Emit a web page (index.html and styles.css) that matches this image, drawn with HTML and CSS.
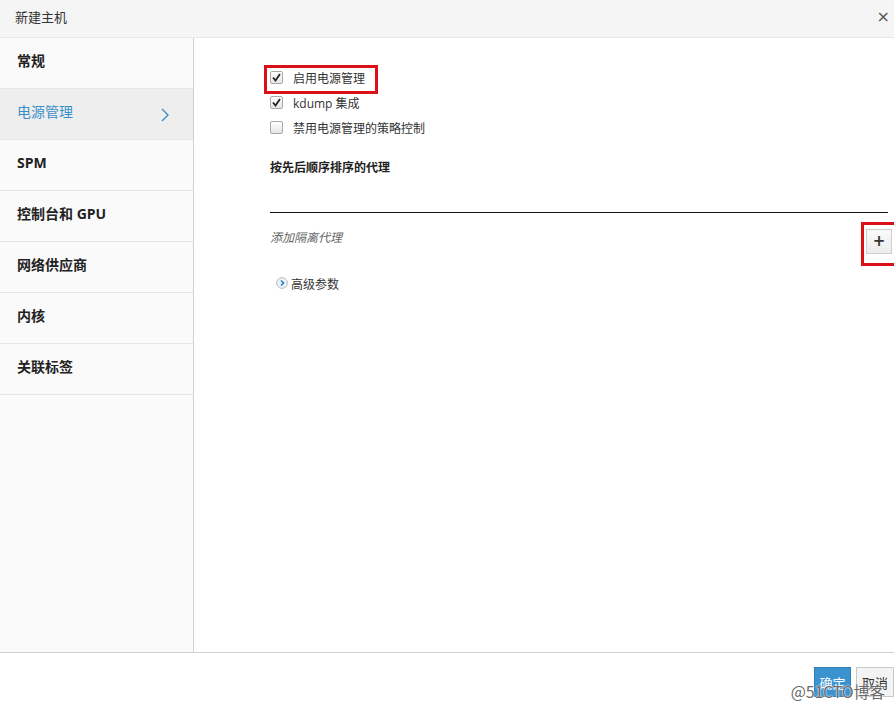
FILE: index.html
```html
<!DOCTYPE html>
<html lang="zh">
<head>
<meta charset="utf-8">
<title>新建主机</title>
<link rel="stylesheet" href="styles.css">
</head>
<body>
<div class="dialog">
  <div class="header">
    <span class="title">新建主机</span>
    <span class="close">×</span>
  </div>
  <div class="main">
    <ul class="sidebar">
      <li class="item">常规</li>
      <li class="item active">电源管理
        <svg class="chev" width="10" height="16" viewBox="0 0 10 16"><polyline points="2,2 8,8 2,14" fill="none" stroke="#3b8fc9" stroke-width="1.4"/></svg>
      </li>
      <li class="item">SPM</li>
      <li class="item">控制台和 GPU</li>
      <li class="item">网络供应商</li>
      <li class="item">内核</li>
      <li class="item">关联标签</li>
    </ul>
    <div class="content">
      <div class="row marked">
        <span class="cb checked"><svg width="9" height="9" viewBox="0 0 9 9"><polyline points="1,4.5 3.5,7.5 8,1" fill="none" stroke="#222" stroke-width="1.8"/></svg></span>
        <span class="label">启用电源管理</span>
      </div>
      <div class="row">
        <span class="cb checked"><svg width="9" height="9" viewBox="0 0 9 9"><polyline points="1,4.5 3.5,7.5 8,1" fill="none" stroke="#222" stroke-width="1.8"/></svg></span>
        <span class="label">kdump 集成</span>
      </div>
      <div class="row">
        <span class="cb"></span>
        <span class="label">禁用电源管理的策略控制</span>
      </div>
      <div class="heading">按先后顺序排序的代理</div>
      <div class="proxy-list"></div>
      <div class="add-row">
        <span class="add-label">添加隔离代理</span>
        <span class="plus-wrap"><button class="plus">+</button></span>
      </div>
      <div class="advanced">
        <span class="adv-icon"><svg width="12" height="12" viewBox="0 0 12 12"><circle cx="6" cy="6" r="5.4" fill="#eef2f6" stroke="#b5bcc4" stroke-width="1"/><polyline points="5,3.5 7.5,6 5,8.5" fill="none" stroke="#2f7fc0" stroke-width="1.6"/></svg></span>
        <span class="adv-label">高级参数</span>
      </div>
    </div>
  </div>
  <div class="footer">
    <button class="btn primary">确定</button>
    <button class="btn">取消</button>
    <span class="watermark">@51CTO博客</span>
  </div>
</div>
</body>
</html>
```
FILE: styles.css
```css
* { box-sizing: border-box; }
html, body {
  margin: 0;
  padding: 0;
  width: 894px;
  height: 708px;
  overflow: hidden;
  background: #ffffff;
  font-family: "Open Sans", "Noto Sans CJK SC", sans-serif;
  color: #333333;
}
.dialog {
  display: flex;
  flex-direction: column;
  height: 708px;
}
.header {
  height: 38px;
  background: #f5f5f5;
  border-bottom: 1px solid #e9e9e9;
  display: flex;
  align-items: center;
  justify-content: space-between;
  padding: 0 4px 4px 15px;
  flex-shrink: 0;
}
.title {
  font-size: 13px;
  color: #333;
}
.close {
  font-size: 16px;
  color: #555;
  font-family: "DejaVu Sans", sans-serif;
  line-height: 1;
}
.main {
  display: flex;
  flex: 1;
  min-height: 0;
}
.sidebar {
  list-style: none;
  margin: 0;
  padding: 0;
  width: 194px;
  flex-shrink: 0;
  background: #fafafa;
  border-right: 1px solid #d2d2d2;
}
.item {
  position: relative;
  height: 51px;
  border-bottom: 1px solid #e6e6e6;
  padding-left: 17px;
  display: flex;
  align-items: center;
  font-size: 14px;
  font-weight: 700;
  color: #222;
  padding-bottom: 6px;
}
.item.active {
  background: #eeeeee;
  color: #3b8fc9;
  font-weight: 400;
}
.chev {
  position: absolute;
  left: 160px;
  top: 18px;
}
.content {
  flex: 1;
  padding: 27px 2px 0 76px;
  font-size: 12px;
}
.row {
  position: relative;
  height: 25px;
  display: flex;
  align-items: center;
}
.marked::after {
  content: "";
  position: absolute;
  left: -6px;
  top: 0px;
  width: 108px;
  height: 23px;
  border: 3px solid #dc1018;
}
.cb {
  width: 13px;
  height: 13px;
  border: 1px solid #a9a9a9;
  border-radius: 2px;
  background: linear-gradient(#ffffff, #e6e6e6);
  display: flex;
  align-items: center;
  justify-content: center;
  margin-right: 10px;
  flex-shrink: 0;
}
.label {
  font-size: 12px;
  color: #333;
}
.heading {
  margin-top: 18px;
  height: 20px;
  line-height: 20px;
  font-weight: 700;
  font-size: 12px;
  color: #222;
}
.proxy-list {
  height: 35px;
  border-bottom: 1px solid #111;
  margin-right: 4px;
}
.add-row {
  margin-top: 16px;
  display: flex;
  justify-content: space-between;
  align-items: flex-start;
}
.add-label {
  font-style: italic;
  color: #666;
  line-height: 18px;
  font-size: 12px;
}
.plus-wrap {
  position: relative;
  display: block;
}
.plus-wrap::after {
  content: "";
  position: absolute;
  left: -5px;
  top: -7px;
  width: 37px;
  height: 38px;
  border: 3px solid #dc1018;
}
.plus {
  width: 26px;
  height: 25px;
  border: 1px solid #cfcfcf;
  background: linear-gradient(#fafafa, #ececec);
  font-family: "DejaVu Sans", sans-serif;
  font-weight: 700;
  font-size: 15px;
  color: #333;
  padding: 0;
  line-height: 1;
  display: block;
}
.advanced {
  margin-top: 21px;
  display: flex;
  align-items: center;
  height: 18px;
  padding-left: 6px;
}
.adv-icon {
  width: 12px;
  height: 12px;
  display: flex;
  margin-right: 3px;
  margin-top: -2px;
}
.adv-label {
  font-size: 12px;
  color: #333;
}
.footer {
  position: relative;
  height: 56px;
  flex-shrink: 0;
  border-top: 1px solid #cfcfcf;
  display: flex;
  justify-content: flex-end;
  align-items: flex-start;
  padding-top: 14px;
  gap: 5px;
}
.btn {
  height: 30px;
  width: 38px;
  padding: 0;
  font-family: "Noto Sans CJK SC", sans-serif;
  font-size: 13px;
  border: 1px solid #c8c8c8;
  background: #f4f4f4;
  color: #333;
}
.btn.primary {
  background: #3a92cf;
  border-color: #2e7fb8;
  color: #fff;
  width: 37px;
}
.watermark {
  position: absolute;
  right: 9px;
  top: 26px;
  font-family: "Noto Sans CJK SC", sans-serif;
  font-size: 16px;
  color: #6a6a6a;
  text-shadow: 0 0 2px #fff, 0 0 1px #fff;
  letter-spacing: -0.2px;
}
```
